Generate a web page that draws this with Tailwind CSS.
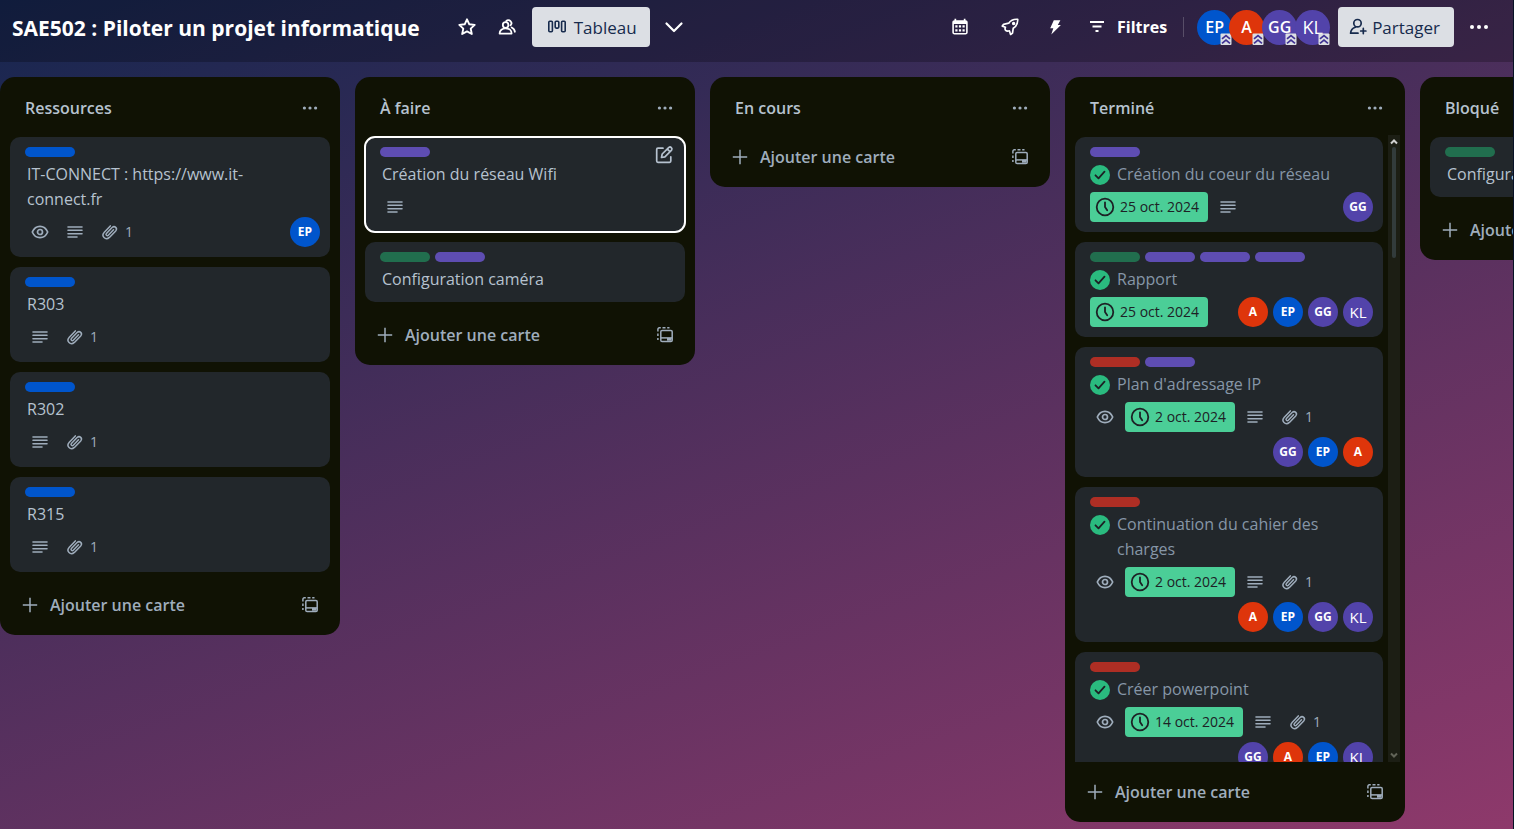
<!DOCTYPE html>
<html lang="fr">
<head>
<meta charset="utf-8">
<title>SAE502 : Piloter un projet informatique</title>
<script src="https://cdn.jsdelivr.net/npm/@tailwindcss/browser@4"></script>
</head>
<body class="flex h-screen flex-col overflow-hidden border-r border-[#081226] bg-[linear-gradient(160deg,#16264f,#8e396b)] font-['Open_Sans','Noto_Sans',sans-serif] text-[16px] leading-[25px] text-[#b6c2cf]">

<svg class="hidden" aria-hidden="true">
  <symbol id="star" viewBox="0 0 20 20"><path d="M10 2.3l2.3 5 5.4.6-4 3.7 1.1 5.4L10 14.4 5.2 17l1.1-5.4-4-3.7 5.4-.6z" fill="none" stroke="currentColor" stroke-width="1.9" stroke-linejoin="round"/></symbol>
  <symbol id="people" viewBox="0 0 20 20"><g fill="none" stroke="currentColor" stroke-width="1.8" stroke-linejoin="round" stroke-linecap="round"><circle cx="8.6" cy="8" r="2.8"/><path d="M2.600 16.600c0-3.200 2.700-5.200 6-5.200s6 2 6 5.200z"/><path d="M9.200 4.100a2.900 2.900 0 1 1 4.300 4.200M14.700 10.500c1.900.9 3 2.400 3.200 4.300"/></g></symbol>
  <symbol id="boards" viewBox="0 0 20 20"><g fill="none" stroke="currentColor" stroke-width="1.6"><rect x="1.800" y="4.300" width="3.600" height="10.400" rx="1"/><rect x="8.200" y="4.300" width="3.600" height="6.800" rx="1"/><rect x="14.600" y="4.300" width="3.600" height="10.400" rx="1"/></g></symbol>
  <symbol id="chevron" viewBox="0 0 20 20"><path d="M2.500 6.500L10 14l7.500-7.500" fill="none" stroke="currentColor" stroke-width="2.200" stroke-linecap="round" stroke-linejoin="round"/></symbol>
  <symbol id="calendar" viewBox="0 0 20 20"><path fill="currentColor" fill-rule="evenodd" d="M4.500 1.800h1.700v1.400h7.600V1.800h1.700v1.400c1.300 0 2.200.9 2.200 2.200v9.900c0 1.300-.9 2.200-2.200 2.200h-11c-1.300 0-2.200-.9-2.200-2.200V5.400c0-1.300.9-2.200 2.200-2.200zM3.900 7v8.400c0 .4.200.6.600.6h11c.4 0 .6-.2.6-.6V7z"/><g fill="currentColor"><path d="M5.300 8.300h2.200v2.200H5.300zM8.900 8.300h2.200v2.200H8.900zM12.500 8.300h2.200v2.200h-2.200zM5.300 12.200h2.200v2.200H5.300zM8.900 12.200h2.200v2.200H8.900zM12.500 12.200h2.200v2.200h-2.200z"/></g></symbol>
  <symbol id="rocket" viewBox="0 0 20 20"><g fill="none" stroke="currentColor" stroke-width="1.700" stroke-linejoin="round"><path d="M17.700 2.300c-4-.3-7 .9-9 3.900L3.600 7.300 2.300 9.100l3.200 1.100c-.7 1.300-.6 2.300.2 3.200.9.900 2 1 3.700.4l1.200 3.700 1.900-1.400.7-4.800c3.200-2 4.700-5 4.500-9z"/><circle cx="13.600" cy="6.500" r=".9"/></g></symbol>
  <symbol id="bolt" viewBox="0 0 20 20"><path fill="currentColor" d="M8.800 3.200h6.600L12.800 8h3.100l-9.600 9.600 2-6.300H5.200z"/></symbol>
  <symbol id="filter" viewBox="0 0 20 20"><path d="M3 5h14M5.500 9.500h9M8.500 14h3" fill="none" stroke="currentColor" stroke-width="1.900"/></symbol>
  <symbol id="share" viewBox="0 0 20 20"><g fill="none" stroke="currentColor" stroke-width="1.700" stroke-linecap="round" stroke-linejoin="round"><circle cx="9.500" cy="6.200" r="3.700"/><path d="M7.400 10.200C4.500 11.100 2.700 13.300 2.600 16.200h7.400M15.300 11.400v5.200M12.700 14h5.200"/></g></symbol>
  <symbol id="dots" viewBox="0 0 20 20"><g fill="currentColor"><circle cx="3" cy="10" r="2"/><circle cx="10" cy="10" r="2"/><circle cx="17" cy="10" r="2"/></g></symbol>
  <symbol id="rank" viewBox="0 0 12 12"><rect x=".5" y=".5" width="11" height="11.500" rx="1" fill="#dcdfe4"/><path d="M2 5.800l4-3.200 4 3.200M2 10.300l4-3.200 4 3.200" fill="none" stroke="#403294" stroke-width="1.700"/></symbol>
  <symbol id="eye" viewBox="0 0 20 20"><g fill="none" stroke="currentColor" stroke-width="1.700"><path d="M2.300 10c1.600-3.700 4.300-5.700 7.700-5.700s6.100 2 7.700 5.700c-1.600 3.700-4.300 5.700-7.700 5.700S3.900 13.700 2.300 10z" stroke-linejoin="round"/><circle cx="10" cy="10" r="2.500"/></g></symbol>
  <symbol id="desc" viewBox="0 0 20 20"><path d="M3 5h14M3 8.300h14M3 11.700h14M3 15h9" fill="none" stroke="currentColor" stroke-width="1.600" stroke-linecap="round"/></symbol>
  <symbol id="clip" viewBox="0 0 20 20"><path d="M13.500 7.800l-5.200 5.400a1.300 1.300 0 0 1-1.900-1.800l5.700-5.900c2.600-2.300 5.800.9 3.600 3.400l-6.300 6.500c-3.900 3.500-8.700-1.300-5.100-5.100L10.300 3.900" fill="none" stroke="currentColor" stroke-width="1.500" stroke-linecap="round" stroke-linejoin="round"/></symbol>
  <symbol id="clock" viewBox="0 0 20 20"><g fill="none" stroke="currentColor" stroke-width="1.800" stroke-linecap="round" stroke-linejoin="round"><circle cx="10" cy="10" r="8.300"/><path d="M10 5.300V10l2.200 3.200"/></g></symbol>
  <symbol id="check" viewBox="0 0 20 20"><circle cx="10" cy="10" r="10" fill="#2abb7f"/><path d="M5.500 10.300l3 3 6-6.600" fill="none" stroke="#1d2125" stroke-width="1.800" stroke-linecap="round" stroke-linejoin="round"/></symbol>
  <symbol id="plus" viewBox="0 0 20 20"><path d="M10 2.800v14.400M2.800 10h14.400" fill="none" stroke="currentColor" stroke-width="1.500"/></symbol>
  <symbol id="template" viewBox="0 0 20 20"><g fill="none" stroke="currentColor" stroke-width="1.500"><rect x="5.800" y="5.500" width="11.400" height="11" rx="1.300"/><path d="M6 12.900h11"/><path d="M2.900 15v-2M2.900 11v-2.500M2.900 6.500V4.200c0-.8.600-1.400 1.400-1.400h1.500M7.500 2.800h3M12.200 2.800h2.300"/></g><path d="M12 13h4.500v2.700H12z" fill="currentColor"/></symbol>
  <symbol id="edit" viewBox="0 0 20 20"><g fill="none" stroke="currentColor" stroke-width="1.700" stroke-linecap="round" stroke-linejoin="round"><path d="M9 3.200H3.900c-.7 0-1.200.5-1.200 1.200v11.700c0 .7.500 1.200 1.200 1.200h11.700c.7 0 1.200-.5 1.200-1.200v-4.300"/><path d="M7.500 12.500l.7-3.500 6.700-6.600c1.700-1.200 3.900.9 2.700 2.700l-6.700 6.700zM13.400 4.200l2.500 2.500"/></g></symbol>
</svg>

<header class="flex h-[62px] shrink-0 items-start bg-black/24 pt-[7px] pr-6 pl-3 text-white">
  <h1 class="text-[21px] leading-[42px] font-bold whitespace-nowrap">SAE502 : Piloter un projet informatique</h1>
  <button class="ml-[27px] grid size-10 place-items-center" aria-label="Favori"><svg class="size-5"><use href="#star"/></svg></button>
  <button class="grid size-10 place-items-center" aria-label="Visibilité"><svg class="size-5"><use href="#people"/></svg></button>
  <button class="ml-[5px] flex h-10 items-center gap-[7px] rounded-[4px] bg-[#dcdfe4] pr-[13px] pl-[15px] text-[17px] font-medium text-[#172b4d]"><svg class="size-5"><use href="#boards"/></svg>Tableau</button>
  <button class="ml-1 grid size-10 place-items-center" aria-label="Vues"><svg class="size-5"><use href="#chevron"/></svg></button>

  <div class="ml-auto flex items-center">
    <button class="grid size-10 place-items-center" aria-label="Calendrier"><svg class="size-5"><use href="#calendar"/></svg></button>
    <button class="ml-[10px] grid size-10 place-items-center" aria-label="Power-ups"><svg class="size-5"><use href="#rocket"/></svg></button>
    <button class="ml-[5px] grid size-10 place-items-center" aria-label="Automatisation"><svg class="size-5"><use href="#bolt"/></svg></button>
    <button class="ml-3 flex h-10 items-center gap-[10px] text-[16px] font-bold"><svg class="size-5"><use href="#filter"/></svg>Filtres</button>
    <span class="mr-[13px] ml-4 h-5 w-px bg-white/20"></span>
    <div class="flex text-[16px] font-semibold">
      <button class="relative size-[35px] rounded-full bg-[#0055cc]">EP<svg class="absolute right-0 bottom-0 size-3"><use href="#rank"/></svg></button>
      <button class="relative -ml-[3px] size-[35px] rounded-full bg-[#de350b]">A<svg class="absolute right-0 bottom-0 size-3"><use href="#rank"/></svg></button>
      <button class="relative -ml-[2px] size-[35px] rounded-full bg-[#5243aa]">GG<svg class="absolute right-0 bottom-0 size-3"><use href="#rank"/></svg></button>
      <button class="relative -ml-[2px] size-[35px] rounded-full bg-[#5243aa] text-[18px] font-normal">KL<svg class="absolute right-0 bottom-0 size-3"><use href="#rank"/></svg></button>
    </div>
    <button class="ml-2 flex h-10 items-center gap-1 rounded-[4px] bg-[#dcdfe4] pr-[14px] pl-[10px] text-[17px] font-medium text-[#172b4d]"><svg class="size-5"><use href="#share"/></svg>Partager</button>
    <button class="ml-[15px] grid h-10 w-5 place-items-center" aria-label="Menu"><svg class="size-5"><use href="#dots"/></svg></button>
  </div>
</header>

<main class="flex min-h-0 flex-1 items-start gap-[15px] overflow-hidden pt-[15px] pb-[7px]">

  <section class="flex max-h-full w-[340px] shrink-0 flex-col rounded-[15px] bg-[#101204]">
    <header class="flex h-[50px] shrink-0 items-center justify-between pt-3 pr-[22px] pl-[25px]">
      <h2 class="font-semibold">Ressources</h2>
      <button class="text-[#9fadbc]" aria-label="Actions de la liste"><svg class="size-4"><use href="#dots"/></svg></button>
    </header>
    <ul class="mt-2 flex flex-col gap-[10px] px-[10px] pt-[2px] pb-[3px]">
      <li class="rounded-[10px] bg-[#22272b] py-[10px] pr-[10px] pl-[15px]">
        <div class="flex gap-[5px]"><span class="h-[10px] w-[50px] rounded-full bg-[#0055cc]"></span></div>
        <a href="#" class="mt-[5px] block pr-[10px] pl-[2px]">IT-CONNECT : https://www.it-connect.fr</a>
        <div class="mt-[5px] flex flex-wrap gap-[5px] text-[14px] leading-[30px] text-[#9fadbc]">
          <span class="grid size-[30px] place-items-center"><svg class="size-5"><use href="#eye"/></svg></span>
          <span class="grid size-[30px] place-items-center"><svg class="size-5"><use href="#desc"/></svg></span>
          <span class="flex items-center"><span class="grid size-[30px] place-items-center"><svg class="size-5"><use href="#clip"/></svg></span>1</span>
          <div class="ml-auto flex gap-[5px] text-center text-[12px] font-bold text-white"><span class="size-[30px] rounded-full bg-[#0055cc]">EP</span></div>
        </div>
      </li>
      <li class="rounded-[10px] bg-[#22272b] py-[10px] pr-[10px] pl-[15px]">
        <div class="flex gap-[5px]"><span class="h-[10px] w-[50px] rounded-full bg-[#0055cc]"></span></div>
        <a href="#" class="mt-[5px] block pl-[2px]">R303</a>
        <div class="mt-[5px] flex flex-wrap gap-[5px] text-[14px] leading-[30px] text-[#9fadbc]">
          <span class="grid size-[30px] place-items-center"><svg class="size-5"><use href="#desc"/></svg></span>
          <span class="flex items-center"><span class="grid size-[30px] place-items-center"><svg class="size-5"><use href="#clip"/></svg></span>1</span>
        </div>
      </li>
      <li class="rounded-[10px] bg-[#22272b] py-[10px] pr-[10px] pl-[15px]">
        <div class="flex gap-[5px]"><span class="h-[10px] w-[50px] rounded-full bg-[#0055cc]"></span></div>
        <a href="#" class="mt-[5px] block pl-[2px]">R302</a>
        <div class="mt-[5px] flex flex-wrap gap-[5px] text-[14px] leading-[30px] text-[#9fadbc]">
          <span class="grid size-[30px] place-items-center"><svg class="size-5"><use href="#desc"/></svg></span>
          <span class="flex items-center"><span class="grid size-[30px] place-items-center"><svg class="size-5"><use href="#clip"/></svg></span>1</span>
        </div>
      </li>
      <li class="rounded-[10px] bg-[#22272b] py-[10px] pr-[10px] pl-[15px]">
        <div class="flex gap-[5px]"><span class="h-[10px] w-[50px] rounded-full bg-[#0055cc]"></span></div>
        <a href="#" class="mt-[5px] block pl-[2px]">R315</a>
        <div class="mt-[5px] flex flex-wrap gap-[5px] text-[14px] leading-[30px] text-[#9fadbc]">
          <span class="grid size-[30px] place-items-center"><svg class="size-5"><use href="#desc"/></svg></span>
          <span class="flex items-center"><span class="grid size-[30px] place-items-center"><svg class="size-5"><use href="#clip"/></svg></span>1</span>
        </div>
      </li>
    </ul>
    <footer class="flex h-[60px] shrink-0 items-center justify-between px-5 text-[#9fadbc]">
      <button class="flex items-center gap-[10px] font-semibold"><svg class="size-5"><use href="#plus"/></svg>Ajouter une carte</button>
      <button aria-label="Créer à partir d'un modèle"><svg class="block size-5"><use href="#template"/></svg></button>
    </footer>
  </section>

  <section class="flex max-h-full w-[340px] shrink-0 flex-col rounded-[15px] bg-[#101204]">
    <header class="flex h-[50px] shrink-0 items-center justify-between pt-3 pr-[22px] pl-[25px]">
      <h2 class="font-semibold">À faire</h2>
      <button class="text-[#9fadbc]" aria-label="Actions de la liste"><svg class="size-4"><use href="#dots"/></svg></button>
    </header>
    <ul class="mt-2 flex flex-col gap-[10px] px-[10px] pt-[2px] pb-[3px]">
      <li class="relative rounded-[10px] bg-[#22272b] py-[10px] pr-[10px] pl-[15px] outline-2 -outline-offset-1 outline-white">
        <button class="absolute top-2 right-[11px] text-[#b6c2cf]" aria-label="Modifier la carte"><svg class="block size-5"><use href="#edit"/></svg></button>
        <div class="flex gap-[5px]"><span class="h-[10px] w-[50px] rounded-full bg-[#5e4db2]"></span></div>
        <a href="#" class="mt-[5px] block pl-[2px]">Création du réseau Wifi</a>
        <div class="mt-[5px] flex text-[#9fadbc]">
          <span class="grid size-[30px] place-items-center"><svg class="size-5"><use href="#desc"/></svg></span>
        </div>
      </li>
      <li class="rounded-[10px] bg-[#22272b] py-[10px] pr-[10px] pl-[15px]">
        <div class="flex gap-[5px]"><span class="h-[10px] w-[50px] rounded-full bg-[#216e4e]"></span><span class="h-[10px] w-[50px] rounded-full bg-[#5e4db2]"></span></div>
        <a href="#" class="mt-[5px] block pl-[2px]">Configuration caméra</a>
      </li>
    </ul>
    <footer class="flex h-[60px] shrink-0 items-center justify-between px-5 text-[#9fadbc]">
      <button class="flex items-center gap-[10px] font-semibold"><svg class="size-5"><use href="#plus"/></svg>Ajouter une carte</button>
      <button aria-label="Créer à partir d'un modèle"><svg class="block size-5"><use href="#template"/></svg></button>
    </footer>
  </section>

  <section class="flex max-h-full w-[340px] shrink-0 flex-col rounded-[15px] bg-[#101204]">
    <header class="flex h-[50px] shrink-0 items-center justify-between pt-3 pr-[22px] pl-[25px]">
      <h2 class="font-semibold">En cours</h2>
      <button class="text-[#9fadbc]" aria-label="Actions de la liste"><svg class="size-4"><use href="#dots"/></svg></button>
    </header>
    <footer class="flex h-[60px] shrink-0 items-center justify-between px-5 text-[#9fadbc]">
      <button class="flex items-center gap-[10px] font-semibold"><svg class="size-5"><use href="#plus"/></svg>Ajouter une carte</button>
      <button aria-label="Créer à partir d'un modèle"><svg class="block size-5"><use href="#template"/></svg></button>
    </footer>
  </section>

  <section class="flex max-h-full w-[340px] shrink-0 flex-col rounded-[15px] bg-[#101204]">
    <header class="flex h-[50px] shrink-0 items-center justify-between pt-3 pr-[22px] pl-[25px]">
      <h2 class="font-semibold">Terminé</h2>
      <button class="text-[#9fadbc]" aria-label="Actions de la liste"><svg class="size-4"><use href="#dots"/></svg></button>
    </header>
    <div class="mt-2 flex min-h-0 flex-1 gap-[5px] overflow-hidden pr-[5px] pl-[10px]">
      <ul class="flex flex-1 flex-col gap-[10px] pt-[2px] text-[#8696a7]">
        <li class="rounded-[10px] bg-[#22272b] py-[10px] pr-[10px] pl-[15px]">
          <div class="flex gap-[5px]"><span class="h-[10px] w-[50px] rounded-full bg-[#5e4db2]"></span></div>
          <div class="mt-[5px] flex gap-[7px]"><svg class="mt-[3px] size-5 shrink-0"><use href="#check"/></svg><a href="#">Création du coeur du réseau</a></div>
          <div class="mt-[5px] flex flex-wrap gap-[5px] text-[14px] leading-[30px] text-[#9fadbc]">
            <span class="flex items-center rounded-[4px] bg-[#4bce97] pr-[9px] text-[#1d2125]"><span class="grid size-[30px] place-items-center"><svg class="size-5"><use href="#clock"/></svg></span>25 oct. 2024</span>
            <span class="grid size-[30px] place-items-center"><svg class="size-5"><use href="#desc"/></svg></span>
            <div class="ml-auto flex gap-[5px] text-center text-[12px] font-bold text-white"><span class="size-[30px] rounded-full bg-[#5243aa]">GG</span></div>
          </div>
        </li>
        <li class="rounded-[10px] bg-[#22272b] py-[10px] pr-[10px] pl-[15px]">
          <div class="flex gap-[5px]"><span class="h-[10px] w-[50px] rounded-full bg-[#216e4e]"></span><span class="h-[10px] w-[50px] rounded-full bg-[#5e4db2]"></span><span class="h-[10px] w-[50px] rounded-full bg-[#5e4db2]"></span><span class="h-[10px] w-[50px] rounded-full bg-[#5e4db2]"></span></div>
          <div class="mt-[5px] flex gap-[7px]"><svg class="mt-[3px] size-5 shrink-0"><use href="#check"/></svg><a href="#">Rapport</a></div>
          <div class="mt-[5px] flex flex-wrap gap-[5px] text-[14px] leading-[30px] text-[#9fadbc]">
            <span class="flex items-center rounded-[4px] bg-[#4bce97] pr-[9px] text-[#1d2125]"><span class="grid size-[30px] place-items-center"><svg class="size-5"><use href="#clock"/></svg></span>25 oct. 2024</span>
            <div class="ml-auto flex gap-[5px] text-center text-[12px] font-bold text-white"><span class="size-[30px] rounded-full bg-[#de350b]">A</span><span class="size-[30px] rounded-full bg-[#0055cc]">EP</span><span class="size-[30px] rounded-full bg-[#5243aa]">GG</span><span class="size-[30px] rounded-full bg-[#5243aa] text-[15px] font-normal">KL</span></div>
          </div>
        </li>
        <li class="rounded-[10px] bg-[#22272b] py-[10px] pr-[10px] pl-[15px]">
          <div class="flex gap-[5px]"><span class="h-[10px] w-[50px] rounded-full bg-[#ae2e24]"></span><span class="h-[10px] w-[50px] rounded-full bg-[#5e4db2]"></span></div>
          <div class="mt-[5px] flex gap-[7px]"><svg class="mt-[3px] size-5 shrink-0"><use href="#check"/></svg><a href="#">Plan d'adressage IP</a></div>
          <div class="mt-[5px] flex flex-wrap gap-[5px] text-[14px] leading-[30px] text-[#9fadbc]">
            <span class="grid size-[30px] place-items-center"><svg class="size-5"><use href="#eye"/></svg></span>
            <span class="flex items-center rounded-[4px] bg-[#4bce97] pr-[9px] text-[#1d2125]"><span class="grid size-[30px] place-items-center"><svg class="size-5"><use href="#clock"/></svg></span>2 oct. 2024</span>
            <span class="grid size-[30px] place-items-center"><svg class="size-5"><use href="#desc"/></svg></span>
            <span class="flex items-center"><span class="grid size-[30px] place-items-center"><svg class="size-5"><use href="#clip"/></svg></span>1</span>
            <div class="ml-auto flex gap-[5px] text-center text-[12px] font-bold text-white"><span class="size-[30px] rounded-full bg-[#5243aa]">GG</span><span class="size-[30px] rounded-full bg-[#0055cc]">EP</span><span class="size-[30px] rounded-full bg-[#de350b]">A</span></div>
          </div>
        </li>
        <li class="rounded-[10px] bg-[#22272b] py-[10px] pr-[10px] pl-[15px]">
          <div class="flex gap-[5px]"><span class="h-[10px] w-[50px] rounded-full bg-[#ae2e24]"></span></div>
          <div class="mt-[5px] flex gap-[7px]"><svg class="mt-[3px] size-5 shrink-0"><use href="#check"/></svg><a href="#">Continuation du cahier des charges</a></div>
          <div class="mt-[5px] flex flex-wrap gap-[5px] text-[14px] leading-[30px] text-[#9fadbc]">
            <span class="grid size-[30px] place-items-center"><svg class="size-5"><use href="#eye"/></svg></span>
            <span class="flex items-center rounded-[4px] bg-[#4bce97] pr-[9px] text-[#1d2125]"><span class="grid size-[30px] place-items-center"><svg class="size-5"><use href="#clock"/></svg></span>2 oct. 2024</span>
            <span class="grid size-[30px] place-items-center"><svg class="size-5"><use href="#desc"/></svg></span>
            <span class="flex items-center"><span class="grid size-[30px] place-items-center"><svg class="size-5"><use href="#clip"/></svg></span>1</span>
            <div class="ml-auto flex gap-[5px] text-center text-[12px] font-bold text-white"><span class="size-[30px] rounded-full bg-[#de350b]">A</span><span class="size-[30px] rounded-full bg-[#0055cc]">EP</span><span class="size-[30px] rounded-full bg-[#5243aa]">GG</span><span class="size-[30px] rounded-full bg-[#5243aa] text-[15px] font-normal">KL</span></div>
          </div>
        </li>
        <li class="rounded-[10px] bg-[#22272b] py-[10px] pr-[10px] pl-[15px]">
          <div class="flex gap-[5px]"><span class="h-[10px] w-[50px] rounded-full bg-[#ae2e24]"></span></div>
          <div class="mt-[5px] flex gap-[7px]"><svg class="mt-[3px] size-5 shrink-0"><use href="#check"/></svg><a href="#">Créer powerpoint</a></div>
          <div class="mt-[5px] flex flex-wrap gap-[5px] text-[14px] leading-[30px] text-[#9fadbc]">
            <span class="grid size-[30px] place-items-center"><svg class="size-5"><use href="#eye"/></svg></span>
            <span class="flex items-center rounded-[4px] bg-[#4bce97] pr-[9px] text-[#1d2125]"><span class="grid size-[30px] place-items-center"><svg class="size-5"><use href="#clock"/></svg></span>14 oct. 2024</span>
            <span class="grid size-[30px] place-items-center"><svg class="size-5"><use href="#desc"/></svg></span>
            <span class="flex items-center"><span class="grid size-[30px] place-items-center"><svg class="size-5"><use href="#clip"/></svg></span>1</span>
            <div class="ml-auto flex gap-[5px] text-center text-[12px] font-bold text-white"><span class="size-[30px] rounded-full bg-[#5243aa]">GG</span><span class="size-[30px] rounded-full bg-[#de350b]">A</span><span class="size-[30px] rounded-full bg-[#0055cc]">EP</span><span class="size-[30px] rounded-full bg-[#5243aa] text-[15px] font-normal">KL</span></div>
          </div>
        </li>
      </ul>
      <div class="flex w-3 flex-col items-center bg-[#1c1e14] py-[2px]">
        <svg class="h-[10px] w-2 text-[#d0d0d0]" viewBox="0 0 8 8"><path d="M1 5.500l3-3 3 3" fill="none" stroke="currentColor" stroke-width="2"/></svg>
        <span class="h-[111px] w-1 rounded-full bg-[#323b3b]"></span>
        <svg class="mt-auto h-[10px] w-2 text-[#626458]" viewBox="0 0 8 8"><path d="M1 2.500l3 3 3-3" fill="none" stroke="currentColor" stroke-width="2"/></svg>
      </div>
    </div>
    <footer class="flex h-[60px] shrink-0 items-center justify-between px-5 text-[#9fadbc]">
      <button class="flex items-center gap-[10px] font-semibold"><svg class="size-5"><use href="#plus"/></svg>Ajouter une carte</button>
      <button aria-label="Créer à partir d'un modèle"><svg class="block size-5"><use href="#template"/></svg></button>
    </footer>
  </section>

  <section class="flex max-h-full w-[340px] shrink-0 flex-col rounded-[15px] bg-[#101204]">
    <header class="flex h-[50px] shrink-0 items-center justify-between pt-3 pr-[22px] pl-[25px]">
      <h2 class="font-semibold">Bloqué</h2>
    </header>
    <ul class="mt-2 flex flex-col gap-[10px] px-[10px] pt-[2px] pb-[3px]">
      <li class="rounded-[10px] bg-[#22272b] py-[10px] pr-[10px] pl-[15px]">
        <div class="flex gap-[5px]"><span class="h-[10px] w-[50px] rounded-full bg-[#216e4e]"></span></div>
        <a href="#" class="mt-[5px] block pl-[2px]">Configuration</a>
      </li>
    </ul>
    <footer class="flex h-[60px] shrink-0 items-center justify-between px-5 text-[#9fadbc]">
      <button class="flex items-center gap-[10px] font-semibold"><svg class="size-5"><use href="#plus"/></svg>Ajouter une carte</button>
    </footer>
  </section>
</main>
</body>
</html>
